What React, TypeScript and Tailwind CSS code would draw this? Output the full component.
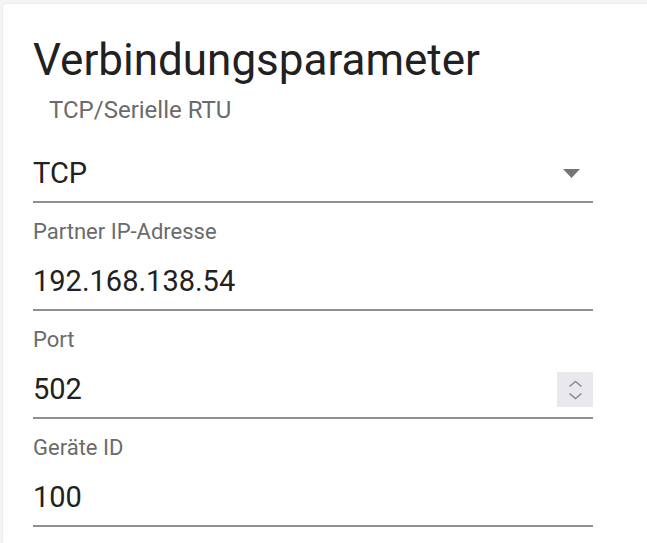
import React from "react";

const font = { fontFamily: "Roboto, 'Liberation Sans', sans-serif" };

interface FieldProps {
  label: string;
  value: string;
  spinner?: boolean;
}

const Field: React.FC<FieldProps> = ({ label, value, spinner }) => {
  return (
    <div className="pt-[18px] pb-[13px] border-b-2 border-[#8f8f8f]">
      <div className="text-[22px] leading-[22px] text-[#6b6b6b]">{label}</div>
      <div className="mt-[24px] h-[29px] flex items-center justify-between">
        <span className="text-[29px] leading-[29px] text-[#212121]">{value}</span>
        {spinner && (
          <div className="w-[36px] h-[35px] bg-[#e9e9ed] flex flex-col items-center justify-center gap-[4px]">
            <svg width="15" height="8" viewBox="0 0 15 8" fill="none">
              <path d="M1.5 6.5 7.5 1.5l6 5" stroke="#8a8a96" strokeWidth="1.6" />
            </svg>
            <svg width="15" height="8" viewBox="0 0 15 8" fill="none">
              <path d="M1.5 1.5 7.5 6.5l6-5" stroke="#8a8a96" strokeWidth="1.6" />
            </svg>
          </div>
        )}
      </div>
    </div>
  );
};

export default function App() {
  return (
    <div className="w-[647px] h-[543px] bg-[#f4f4f4] pl-[3px] pt-[4px] overflow-hidden" style={font}>
      <div className="h-full bg-white rounded-tl-[4px] shadow-[0_0_2px_rgba(0,0,0,0.12)] pl-[30px] pt-[34px]">
        <div className="w-[560px]">
          <h1 className="text-[44px] leading-[44px] text-[#212121] font-normal">Verbindungsparameter</h1>
          <div className="mt-[16px] pl-[16px] text-[24px] leading-[24px] text-[#6b6b6b]">TCP/Serielle RTU</div>
          <div className="mt-[37px] pb-[13px] border-b-2 border-[#8f8f8f] flex items-center justify-between">
            <span className="text-[29px] leading-[29px] text-[#212121]">TCP</span>
            <svg className="mr-[13px]" width="17" height="9" viewBox="0 0 17 9">
              <path d="M0 0h17L8.5 9z" fill="#757575" />
            </svg>
          </div>
          <Field label="Partner IP-Adresse" value="192.168.138.54" />
          <Field label="Port" value="502" spinner />
          <Field label="Geräte ID" value="100" />
        </div>
      </div>
    </div>
  );
}
